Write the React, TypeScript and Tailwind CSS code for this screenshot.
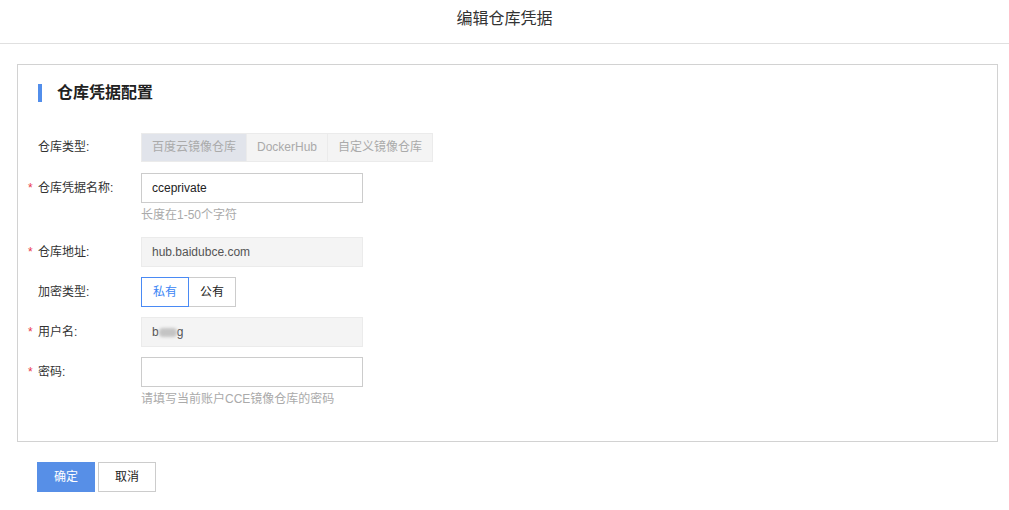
import React from "react";

const font = { fontFamily: '"Liberation Sans", "Noto Sans CJK SC", sans-serif' };

function Label({ text, required }: { text: string; required?: boolean }) {
  return (
    <div className="relative w-[123px] shrink-0 pl-[20px] h-[30px] leading-[30px] text-[12px] text-[#333]">
      {required && (
        <span className="absolute left-[10px] top-0 text-[#e9384a] text-[12px]">*</span>
      )}
      {text}
    </div>
  );
}

export default function App() {
  return (
    <div className="w-[1009px] h-[510px] bg-white overflow-hidden" style={font}>
      <div className="h-[44px] border-b border-[#e0e0e0] flex items-center justify-center text-[16px] text-[#333] pb-[6px]">
        编辑仓库凭据
      </div>
      <div className="ml-[17px] mr-[11px] mt-[20px] border border-[#d2d2d2] pt-[19px] pb-[33px]">
        <div className="flex items-center h-[18px] pl-[20px]">
          <div className="w-[4px] h-[18px] bg-[#528eeb]" />
          <div className="ml-[15px] text-[16px] font-bold text-[#222]">仓库凭据配置</div>
        </div>

        <div className="flex mt-[30px] items-center">
          <Label text="仓库类型:" />
          <div className="flex h-[29px] text-[12px] text-[#aaa]">
            <div className="px-[10px] leading-[27px] border border-[#ebebeb] bg-[#e1e4eb]">百度云镜像仓库</div>
            <div className="px-[10px] leading-[27px] border border-l-0 border-[#ebebeb] bg-[#f4f4f4]">DockerHub</div>
            <div className="px-[10px] leading-[27px] border border-l-0 border-[#ebebeb] bg-[#f4f4f4]">自定义镜像仓库</div>
          </div>
        </div>

        <div className="flex mt-[11px]">
          <Label text="仓库凭据名称:" required />
          <div>
            <div className="w-[222px] h-[30px] border border-[#ccc] pl-[10px] leading-[28px] text-[12px] text-[#222]">
              cceprivate
            </div>
            <div className="mt-[3px] h-[18px] leading-[18px] text-[12px] text-[#aaa]">长度在1-50个字符</div>
          </div>
        </div>

        <div className="flex mt-[13px]">
          <Label text="仓库地址:" required />
          <div className="w-[222px] h-[30px] border border-[#ebebeb] bg-[#f4f4f4] pl-[10px] leading-[28px] text-[12px] text-[#555]">
            hub.baidubce.com
          </div>
        </div>

        <div className="flex mt-[10px]">
          <Label text="加密类型:" />
          <div className="flex h-[30px] text-[12px]">
            <div className="w-[48px] text-center leading-[28px] border border-[#4a8af4] text-[#3b86f5]">私有</div>
            <div className="w-[47px] text-center leading-[28px] border border-l-0 border-[#ccc] text-[#222]">公有</div>
          </div>
        </div>

        <div className="flex mt-[10px]">
          <Label text="用户名:" required />
          <div className="w-[222px] h-[30px] border border-[#ebebeb] bg-[#f4f4f4] pl-[10px] flex items-center text-[12px] text-[#555]">
            <span>b</span>
            <span className="inline-block w-[18px] h-[9px] bg-[#c4c4c4] blur-[1.5px] rounded-sm" />
            <span>g</span>
          </div>
        </div>

        <div className="flex mt-[10px]">
          <Label text="密码:" required />
          <div>
            <div className="w-[222px] h-[30px] border border-[#ccc] bg-white" />
            <div className="mt-[3px] h-[18px] leading-[18px] text-[12px] text-[#aaa]">请填写当前账户CCE镜像仓库的密码</div>
          </div>
        </div>
      </div>

      <div className="flex gap-[3px] ml-[37px] mt-[20px]">
        <button className="w-[58px] h-[30px] bg-[#578fe7] text-white text-[12px]">确定</button>
        <button className="w-[58px] h-[30px] border border-[#ccc] bg-white text-[#222] text-[12px]">取消</button>
      </div>
    </div>
  );
}
